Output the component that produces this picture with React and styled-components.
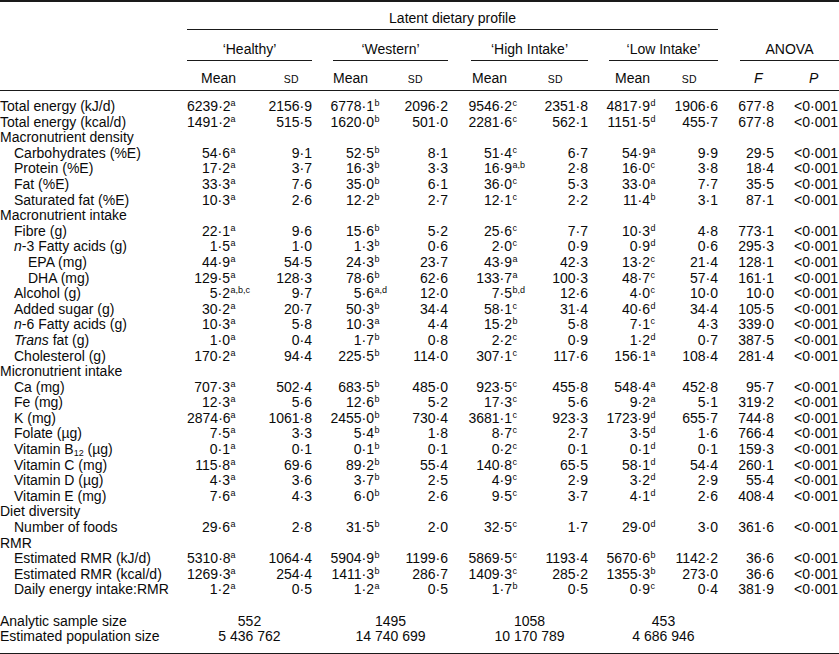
import React from 'react';
import styled, { createGlobalStyle } from 'styled-components';

const GlobalStyle = createGlobalStyle`
  body {
    margin: 0;
    background: #fff;
  }
`;

// columnas: etiqueta, (media, de) x 4 perfiles, F, P
const COLS = '187px 68px 57px 80px 56px 80px 60px 80px 50px 67px 54px';

const Table = styled.div`
  width: 839px;
  font-family: "Liberation Sans", Arial, Helvetica, sans-serif;
  font-size: 14px;
  color: #0a0a0a;
  border-top: 2px solid #1a1a1a;
  border-bottom: 2px solid #1a1a1a;
`;

const Head = styled.div`
  display: grid;
  grid-template-columns: ${COLS};
  line-height: 16px;
  border-bottom: 1px solid #1a1a1a;
`;

const HeadCell = styled.div`
  grid-column: ${(p) => p.$col};
  grid-row: ${(p) => p.$row};
  padding: ${(p) => p.$pad};
  margin-left: ${(p) => p.$ml || 0}px;
  text-align: ${(p) => p.$align || 'center'};
  border-bottom: ${(p) => (p.$rule ? '1px solid #1a1a1a' : 'none')};
  white-space: nowrap;
`;

const SmallCaps = styled.span`
  font-size: 10.5px;
  letter-spacing: 0.3px;
`;

const Body = styled.div`
  display: grid;
  grid-template-columns: ${COLS};
  padding: 8px 0;
  line-height: 15.6px;
`;

const Label = styled.div`
  grid-column: ${(p) => (p.$full ? '1 / -1' : '1')};
  padding-left: ${(p) => p.$lvl * 14}px;
  white-space: nowrap;
  min-height: 15.6px;
`;

const MeanCell = styled.div`
  white-space: nowrap;
`;

const Num = styled.span`
  display: inline-block;
  width: ${(p) => p.$w}px;
  text-align: right;
`;

const Sup = styled.sup`
  font-size: 9px;
  line-height: 0;
  vertical-align: 5px;
  margin-left: 0.5px;
`;

const Sub = styled.sub`
  font-size: 9px;
  line-height: 0;
  vertical-align: -2px;
`;

const RightCell = styled.div`
  text-align: right;
  padding-right: ${(p) => p.$pr || 0}px;
  white-space: nowrap;
`;

const FootCell = styled.div`
  grid-column: span 2;
  margin-left: ${(p) => p.$ml}px;
  text-align: center;
  white-space: nowrap;
`;

const I = styled.i`
  font-style: italic;
`;

const MEAN_W = [43, 62, 64, 62];
const GROUP_ML = [0, 21, 23, 21];

const rows = [
  { label: 'Total energy (kJ/d)', v: ['6239·2 a', '2156·9', '6778·1 b', '2096·2', '9546·2 c', '2351·8', '4817·9 d', '1906·6', '677·8'] },
  { label: 'Total energy (kcal/d)', v: ['1491·2 a', '515·5', '1620·0 b', '501·0', '2281·6 c', '562·1', '1151·5 d', '455·7', '677·8'] },
  { section: 'Macronutrient density' },
  { label: 'Carbohydrates (%E)', lvl: 1, v: ['54·6 a', '9·1', '52·5 b', '8·1', '51·4 c', '6·7', '54·9 a', '9·9', '29·5'] },
  { label: 'Protein (%E)', lvl: 1, v: ['17·2 a', '3·7', '16·3 b', '3·3', '16·9 a,b', '2·8', '16·0 c', '3·8', '18·4'] },
  { label: 'Fat (%E)', lvl: 1, v: ['33·3 a', '7·6', '35·0 b', '6·1', '36·0 c', '5·3', '33·0 a', '7·7', '35·5'] },
  { label: 'Saturated fat (%E)', lvl: 1, v: ['10·3 a', '2·6', '12·2 b', '2·7', '12·1 c', '2·2', '11·4 b', '3·1', '87·1'] },
  { section: 'Macronutrient intake' },
  { label: 'Fibre (g)', lvl: 1, v: ['22·1 a', '9·6', '15·6 b', '5·2', '25·6 c', '7·7', '10·3 d', '4·8', '773·1'] },
  { label: <><I>n</I>-3 Fatty acids (g)</>, lvl: 1, v: ['1·5 a', '1·0', '1·3 b', '0·6', '2·0 c', '0·9', '0·9 d', '0·6', '295·3'] },
  { label: 'EPA (mg)', lvl: 2, v: ['44·9 a', '54·5', '24·3 b', '23·7', '43·9 a', '42·3', '13·2 c', '21·4', '128·1'] },
  { label: 'DHA (mg)', lvl: 2, v: ['129·5 a', '128·3', '78·6 b', '62·6', '133·7 a', '100·3', '48·7 c', '57·4', '161·1'] },
  { label: 'Alcohol (g)', lvl: 1, v: ['5·2 a,b,c', '9·7', '5·6 a,d', '12·0', '7·5 b,d', '12·6', '4·0 c', '10·0', '10·0'] },
  { label: 'Added sugar (g)', lvl: 1, v: ['30·2 a', '20·7', '50·3 b', '34·4', '58·1 c', '31·4', '40·6 d', '34·4', '105·5'] },
  { label: <><I>n</I>-6 Fatty acids (g)</>, lvl: 1, v: ['10·3 a', '5·8', '10·3 a', '4·4', '15·2 b', '5·8', '7·1 c', '4·3', '339·0'] },
  { label: <><I>Trans</I> fat (g)</>, lvl: 1, v: ['1·0 a', '0·4', '1·7 b', '0·8', '2·2 c', '0·9', '1·2 d', '0·7', '387·5'] },
  { label: 'Cholesterol (g)', lvl: 1, v: ['170·2 a', '94·4', '225·5 b', '114·0', '307·1 c', '117·6', '156·1 a', '108·4', '281·4'] },
  { section: 'Micronutrient intake' },
  { label: 'Ca (mg)', lvl: 1, v: ['707·3 a', '502·4', '683·5 b', '485·0', '923·5 c', '455·8', '548·4 a', '452·8', '95·7'] },
  { label: 'Fe (mg)', lvl: 1, v: ['12·3 a', '5·6', '12·6 b', '5·2', '17·3 c', '5·6', '9·2 a', '5·1', '319·2'] },
  { label: 'K (mg)', lvl: 1, v: ['2874·6 a', '1061·8', '2455·0 b', '730·4', '3681·1 c', '923·3', '1723·9 d', '655·7', '744·8'] },
  { label: 'Folate (µg)', lvl: 1, v: ['7·5 a', '3·3', '5·4 b', '1·8', '8·7 c', '2·7', '3·5 d', '1·6', '766·4'] },
  { label: <>Vitamin B<Sub>12</Sub> (µg)</>, lvl: 1, v: ['0·1 a', '0·1', '0·1 b', '0·1', '0·2 c', '0·1', '0·1 d', '0·1', '159·3'] },
  { label: 'Vitamin C (mg)', lvl: 1, v: ['115·8 a', '69·6', '89·2 b', '55·4', '140·8 c', '65·5', '58·1 d', '54·4', '260·1'] },
  { label: 'Vitamin D (µg)', lvl: 1, v: ['4·3 a', '3·6', '3·7 b', '2·5', '4·9 c', '2·9', '3·2 d', '2·9', '55·4'] },
  { label: 'Vitamin E (mg)', lvl: 1, v: ['7·6 a', '4·3', '6·0 b', '2·6', '9·5 c', '3·7', '4·1 d', '2·6', '408·4'] },
  { section: 'Diet diversity' },
  { label: 'Number of foods', lvl: 1, v: ['29·6 a', '2·8', '31·5 b', '2·0', '32·5 c', '1·7', '29·0 d', '3·0', '361·6'] },
  { section: 'RMR' },
  { label: 'Estimated RMR (kJ/d)', lvl: 1, v: ['5310·8 a', '1064·4', '5904·9 b', '1199·6', '5869·5 c', '1193·4', '5670·6 b', '1142·2', '36·6'] },
  { label: 'Estimated RMR (kcal/d)', lvl: 1, v: ['1269·3 a', '254·4', '1411·3 b', '286·7', '1409·3 c', '285·2', '1355·3 b', '273·0', '36·6'] },
  { label: 'Daily energy intake:RMR', lvl: 1, v: ['1·2 a', '0·5', '1·2 a', '0·5', '1·7 b', '0·5', '0·9 c', '0·4', '381·9'] },
];

const footer = [
  { label: 'Analytic sample size', v: ['552', '1495', '1058', '453'] },
  { label: 'Estimated population size', v: ['5 436 762', '14 740 699', '10 170 789', '4 686 946'] },
];

const groups = ['‘Healthy’', '‘Western’', '‘High Intake’', '‘Low Intake’'];
const meanPadLeft = [14, 21, 24, 27];
const sdPad = [13, 25, 25, 21];

const DataRow = ({ row }) => {
  if (row.section) {
    return <Label $full $lvl={0}>{row.section}</Label>;
  }
  return (
    <>
      <Label $lvl={row.lvl || 0}>{row.label}</Label>
      {[0, 1, 2, 3].map((g) => {
        const [num, sup] = row.v[g * 2].split(' ');
        return (
          <React.Fragment key={g}>
            <MeanCell>
              <Num $w={MEAN_W[g]}>{num}</Num>
              <Sup>{sup}</Sup>
            </MeanCell>
            <RightCell>{row.v[g * 2 + 1]}</RightCell>
          </React.Fragment>
        );
      })}
      <RightCell $pr={11}>{row.v[8]}</RightCell>
      <RightCell $pr={1}>&lt;0·001</RightCell>
    </>
  );
};

const App = () => {
  return (
    <>
      <GlobalStyle />
      <Table>
        <Head>
          <HeadCell $row={1} $col="2 / 10" $pad="8px 0 3px" $rule>
            Latent dietary profile
          </HeadCell>
          {groups.map((g, i) => (
            <HeadCell key={g} $row={2} $col={`${2 + i * 2} / span 2`} $ml={GROUP_ML[i]} $pad="11px 0 3px" $rule>
              {g}
            </HeadCell>
          ))}
          <HeadCell $row={2} $col="10 / span 2" $ml={22} $pad="11px 0 3px" $rule>
            ANOVA
          </HeadCell>
          {groups.map((g, i) => (
            <React.Fragment key={g}>
              <HeadCell $row={3} $col={2 + i * 2} $align="left" $pad={`9px 0 3px ${meanPadLeft[i]}px`}>
                Mean
              </HeadCell>
              <HeadCell $row={3} $col={3 + i * 2} $align="right" $pad={`9px ${sdPad[i]}px 3px 0`}>
                <SmallCaps>SD</SmallCaps>
              </HeadCell>
            </React.Fragment>
          ))}
          <HeadCell $row={3} $col={10} $align="left" $pad="9px 0 3px 36px">
            <I>F</I>
          </HeadCell>
          <HeadCell $row={3} $col={11} $align="left" $pad="9px 0 3px 24px">
            <I>P</I>
          </HeadCell>
        </Head>
        <Body>
          {rows.map((row, i) => (
            <DataRow key={i} row={row} />
          ))}
          <Label $full $lvl={0} />
          {footer.map((f) => (
            <React.Fragment key={f.label}>
              <Label $lvl={0}>{f.label}</Label>
              {f.v.map((val, g) => (
                <FootCell key={g} $ml={GROUP_ML[g]}>
                  {val}
                </FootCell>
              ))}
            </React.Fragment>
          ))}
        </Body>
      </Table>
    </>
  );
};

export default App;
